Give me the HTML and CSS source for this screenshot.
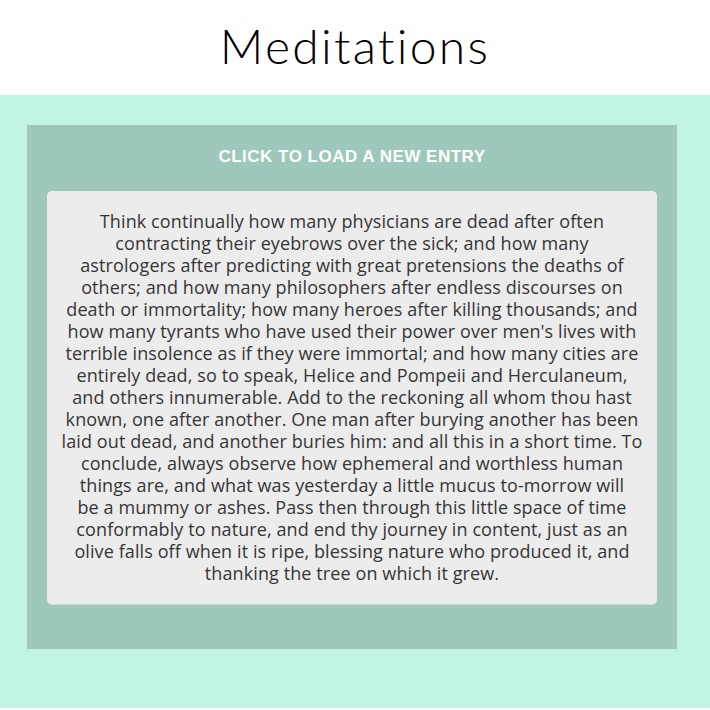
FILE: index.html
```html
<!DOCTYPE html>
<html>
<head>
<meta charset="utf-8">
<link rel="stylesheet" href="styles.css">
</head>
<body>
<header class="header">
  <h1 class="title">Meditations</h1>
</header>
<main class="stage">
  <section class="panel">
    <button class="load-btn">Click to load a new entry</button>
    <div class="card">
      <p class="quote">Think continually how many physicians are dead after often<br>
contracting their eyebrows over the sick; and how many<br>
astrologers after predicting with great pretensions the deaths of<br>
others; and how many philosophers after endless discourses on<br>
death or immortality; how many heroes after killing thousands; and<br>
how many tyrants who have used their power over men's lives with<br>
terrible insolence as if they were immortal; and how many cities are<br>
entirely dead, so to speak, Helice and Pompeii and Herculaneum,<br>
and others innumerable. Add to the reckoning all whom thou hast<br>
known, one after another. One man after burying another has been<br>
laid out dead, and another buries him: and all this in a short time. To<br>
conclude, always observe how ephemeral and worthless human<br>
things are, and what was yesterday a little mucus to-morrow will<br>
be a mummy or ashes. Pass then through this little space of time<br>
conformably to nature, and end thy journey in content, just as an<br>
olive falls off when it is ripe, blessing nature who produced it, and<br>
thanking the tree on which it grew.</p>
    </div>
  </section>
</main>
</body>
</html>
```

FILE: styles.css
```css
html, body {
  margin: 0;
  padding: 0;
  background: #ffffff;
}
body {
  font-family: "Open Sans", "Liberation Sans", sans-serif;
}
.header {
  height: 95px;
  display: flex;
  align-items: center;
  justify-content: center;
}
.title {
  margin: 0;
  font-family: Lato, "Open Sans", sans-serif;
  font-weight: 300;
  font-size: 48px;
  letter-spacing: 2.3px;
  line-height: 1;
  color: #000;
  padding-bottom: 4px;
}
.stage {
  background: #c2f4e4;
  padding: 30px 33px 59px 27px;
}
.panel {
  background: #9ec8bb;
  padding: 21px 20px 45px 20px;
  display: flex;
  flex-direction: column;
}
.load-btn {
  background: transparent;
  border: none;
  padding: 0;
  margin: 0 0 23px 0;
  font-family: "Liberation Sans", Arial, sans-serif;
  font-weight: bold;
  font-size: 17px;
  letter-spacing: 0.5px;
  line-height: 22px;
  color: #ffffff;
  text-transform: uppercase;
  cursor: pointer;
}
.card {
  background: #ececec;
  border-radius: 5px;
  padding: 19px 8px 20px 8px;
  box-shadow: 0 1px 0 #c8dcd4;
}
.quote {
  margin: 0;
  text-align: center;
  font-size: 18px;
  letter-spacing: 0.1px;
  line-height: 22px;
  color: #363636;
  white-space: nowrap;
}
```
